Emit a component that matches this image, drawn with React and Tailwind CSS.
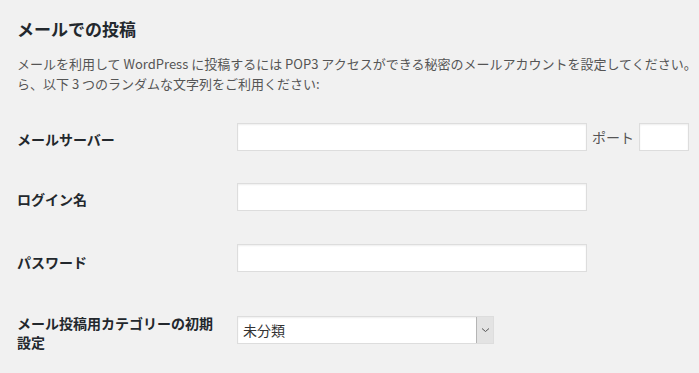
import React from 'react';

const font = { fontFamily: '"Noto Sans CJK JP", "Noto Sans", sans-serif' };

function TextInput({ className = '' }) {
  return (
    <input
      type="text"
      className={`h-[28px] bg-white border border-[#dddddd] shadow-[inset_0_1px_2px_rgba(0,0,0,0.07)] outline-none ${className}`}
    />
  );
}

function Row({ label, labelTop = 'pt-[23px]', children }) {
  return (
    <div className="flex items-start">
      <div className={`w-[220px] shrink-0 text-[14px] leading-[18px] font-bold text-[#23282d] ${labelTop}`}>
        {label}
      </div>
      <div className="py-[16px]">{children}</div>
    </div>
  );
}

export default function App() {
  return (
    <div
      className="w-[699px] h-[373px] overflow-hidden bg-[#f1f1f1] pl-[17px] font-['Noto_Sans_CJK_JP',sans-serif]"
      style={font}
    >
      <h2 className="pt-[18px] text-[17px] leading-[22px] font-bold text-[#23282d]">メールでの投稿</h2>

      <div className="mt-[14px] text-[13px] leading-[20px] text-[#555555]">
        <p className="whitespace-nowrap">
          メールを利用して WordPress に投稿するには POP3 アクセスができる秘密のメールアカウントを設定してください。
        </p>
        <p className="whitespace-nowrap">ら、以下 3 つのランダムな文字列をご利用ください:</p>
      </div>

      <div className="mt-[13px]">
        <Row label="メールサーバー">
          <div className="flex items-center">
            <TextInput className="w-[350px]" />
            <span className="ml-[5px] mr-[5px] text-[14px] text-[#555555]">ポート</span>
            <TextInput className="w-[50px] h-[24px]" />
          </div>
        </Row>
        <Row label="ログイン名">
          <TextInput className="w-[350px]" />
        </Row>
        <Row label="パスワード" labelTop="pt-[26px]">
          <TextInput className="w-[350px] mt-[1px]" />
        </Row>
        <div className="flex items-start pt-[11px]">
          <div className="w-[220px] shrink-0 text-[14px] leading-[19px] font-bold text-[#23282d] pt-[15px]">
            <div>メール投稿用カテゴリーの初期</div>
            <div>設定</div>
          </div>
          <div className="pt-[17px]">
            <div className="flex w-[257px] h-[28px] bg-white border border-[#dddddd] shadow-[inset_0_1px_2px_rgba(0,0,0,0.07)]">
              <div className="flex-1 pl-[5px] text-[14px] leading-[26px] text-[#333333]">未分類</div>
              <div className="w-[17px] flex items-center justify-center bg-[#e3e3e3] border-l border-[#b5b5b5]">
                <svg width="9" height="6" viewBox="0 0 9 6">
                  <path d="M1 1.5 L4.5 4.5 L8 1.5" fill="none" stroke="#555" strokeWidth="1" />
                </svg>
              </div>
            </div>
          </div>
        </div>
      </div>
    </div>
  );
}
